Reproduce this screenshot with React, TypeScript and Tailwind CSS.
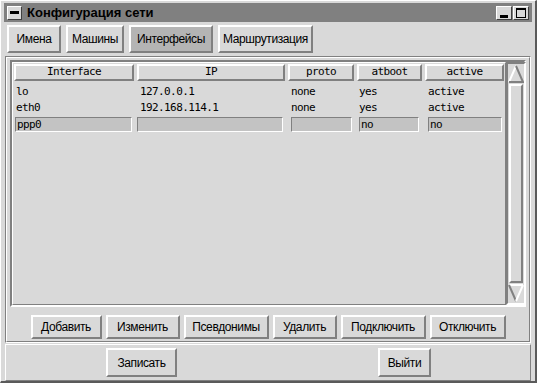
import React from 'react';

const raised = 'border-t-2 border-l-2 border-t-white border-l-white border-r-2 border-b-2 border-r-[#808080] border-b-[#808080]';
const sunken = 'border-t-2 border-l-2 border-t-[#808080] border-l-[#808080] border-r-2 border-b-2 border-r-white border-b-white';
const field = 'h-[15px] bg-[#c3c3c3] border border-t-[#808080] border-l-[#808080] border-r-white border-b-white';
const uiFont = { fontFamily: '"Liberation Sans", sans-serif' };
const monoFont = { fontFamily: '"DejaVu Sans Mono", "Liberation Mono", monospace' };

const columns = [
  { name: 'Interface', w: 'w-[120px]' },
  { name: 'IP', w: 'w-[148px]' },
  { name: 'proto', w: 'w-[66px]' },
  { name: 'atboot', w: 'w-[65px]' },
  { name: 'active', w: 'w-[79px]' },
];

const rows = [
  ['lo', '127.0.0.1', 'none', 'yes', 'active'],
  ['eth0', '192.168.114.1', 'none', 'yes', 'active'],
];

const Btn = ({ label, w, h = 'h-[28px]', pressed = false }: { label: string; w: string; h?: string; pressed?: boolean }) => (
  <div
    className={`${raised} ${w} ${h} flex items-center justify-center text-[12px] tracking-[-0.4px] text-black ${pressed ? 'bg-[#b4b4b4]' : 'bg-[#d9d9d9]'}`}
    style={uiFont}
  >
    {label}
  </div>
);

export default function App() {
  return (
    <div className="w-[537px] h-[383px] bg-[#d9d9d9] border-l border-t border-l-white border-t-white border-r-2 border-b-2 border-r-[#5a5a5a] border-b-[#5a5a5a] flex flex-col overflow-hidden">
      {/* Title bar */}
      <div className="mx-[3px] mt-[2px] h-[19px] bg-[#808080] flex items-center px-[3px]">
        <div className="w-[15px] h-[14px] bg-[#d9d9d9] border border-t-white border-l-white border-r-[#404040] border-b-[#404040] flex items-center justify-center">
          <div className="w-[9px] h-[3px] bg-black" />
        </div>
        <span className="ml-[5px] text-[13px] font-bold text-black flex-1" style={uiFont}>
          Конфигурация сети
        </span>
        <div className="w-[16px] h-[14px] bg-[#d9d9d9] border border-t-white border-l-white border-r-[#404040] border-b-[#404040] flex items-end justify-center pb-[1px]">
          <div className="w-[8px] h-[3px] bg-black" />
        </div>
        <div className="ml-[1px] w-[16px] h-[14px] bg-[#d9d9d9] border border-t-white border-l-white border-r-[#404040] border-b-[#404040] flex items-center justify-center">
          <div className="w-[10px] h-[10px] border border-black border-t-2" />
        </div>
      </div>

      {/* Tabs */}
      <div className="flex gap-[5px] px-[6px] mt-[3px]">
        <Btn label="Имена" w="w-[54px]" />
        <Btn label="Машины" w="w-[58px]" />
        <Btn label="Интерфейсы" w="w-[84px]" pressed />
        <Btn label="Маршрутизация" w="w-[95px]" />
      </div>

      {/* Main frame */}
      <div className="mt-[3px] mx-[4px] h-[287px] border border-t-[#808080] border-l-[#808080] border-r-white border-b-white">
        <div className="h-full border border-t-white border-l-white border-r-[#808080] border-b-[#808080] flex flex-col">
          {/* Table panel */}
          <div className={`${sunken} mx-[3px] mt-[2px] h-[247px] flex`}>
            <div className="flex-1 border border-t-white border-l-white border-r-[#808080] border-b-[#808080] flex flex-col px-[1px] pt-[1px]">
              <div className="flex gap-[3px]">
                {columns.map(c => (
                  <div
                    key={c.name}
                    className={`${raised} ${c.w} h-[17px] flex items-center justify-center text-[11px] tracking-[-0.6px] text-black`}
                    style={monoFont}
                  >
                    {c.name}
                  </div>
                ))}
              </div>
              <div className="mt-[3px]">
                {rows.map(r => (
                  <div key={r[0]} className="flex gap-[3px] h-[16px] items-center text-[11px] tracking-[-0.6px] text-black" style={monoFont}>
                    <span className="w-[120px] pl-[2px]">{r[0]}</span>
                    <span className="w-[148px] pl-[3px]">{r[1]}</span>
                    <span className="w-[66px] pl-[3px]">{r[2]}</span>
                    <span className="w-[65px] pl-[2px]">{r[3]}</span>
                    <span className="w-[79px] pl-[3px]">{r[4]}</span>
                  </div>
                ))}
                <div className="flex h-[16px] items-center text-[11px] tracking-[-0.6px] text-black pl-[1px]" style={monoFont}>
                  <div className={`${field} w-[117px] pl-[1px] leading-[13px]`}>ppp0</div>
                  <div className={`${field} ml-[5px] w-[146px]`} />
                  <div className={`${field} ml-[8px] w-[61px]`} />
                  <div className={`${field} ml-[7px] w-[60px] pl-[1px] leading-[13px]`}>no</div>
                  <div className={`${field} ml-[9px] w-[74px] pl-[1px] leading-[13px]`}>no</div>
                </div>
              </div>
            </div>
            {/* Scrollbar */}
            <div className="w-[20px] flex flex-col border-2 border-t-[#808080] border-l-[#808080] border-r-white border-b-white bg-[#d9d9d9]">
              <svg width="16" height="20" viewBox="0 0 16 20" className="block">
                <polygon points="8,2 1,18 15,18" fill="#d9d9d9" />
                <polyline points="1,18 8,2" stroke="white" strokeWidth="2" fill="none" />
                <polyline points="8,2 15,18 1,18" stroke="#808080" strokeWidth="2" fill="none" />
              </svg>
              <div className="flex-1 mx-[1px] border-2 border-t-white border-l-white border-r-[#808080] border-b-[#808080]" />
              <svg width="16" height="20" viewBox="0 0 16 20" className="block">
                <polygon points="1,2 15,2 8,18" fill="#d9d9d9" />
                <polyline points="1,2 15,2" stroke="white" strokeWidth="2" fill="none" />
                <polyline points="1,2 8,18" stroke="#808080" strokeWidth="2" fill="none" />
                <polyline points="8,18 15,2" stroke="white" strokeWidth="2" fill="none" />
              </svg>
            </div>
          </div>

          {/* Action buttons */}
          <div className="flex justify-center gap-[4px] mt-[8px]">
            <Btn label="Добавить" w="w-[71px]" h="h-[24px]" />
            <Btn label="Изменить" w="w-[74px]" h="h-[24px]" />
            <Btn label="Псевдонимы" w="w-[85px]" h="h-[24px]" />
            <Btn label="Удалить" w="w-[64px]" h="h-[24px]" />
            <Btn label="Подключить" w="w-[85px]" h="h-[24px]" />
            <Btn label="Отключить" w="w-[76px]" h="h-[24px]" />
          </div>
        </div>
      </div>

      {/* Bottom frame */}
      <div className="mx-[4px] mt-[1px] flex-1 border border-t-white border-l-white border-r-[#808080] border-b-[#808080] flex items-center">
        <div className="ml-[100px]">
          <Btn label="Записать" w="w-[71px]" h="h-[29px]" />
        </div>
        <div className="ml-[201px]">
          <Btn label="Выйти" w="w-[53px]" h="h-[29px]" />
        </div>
      </div>
    </div>
  );
}
